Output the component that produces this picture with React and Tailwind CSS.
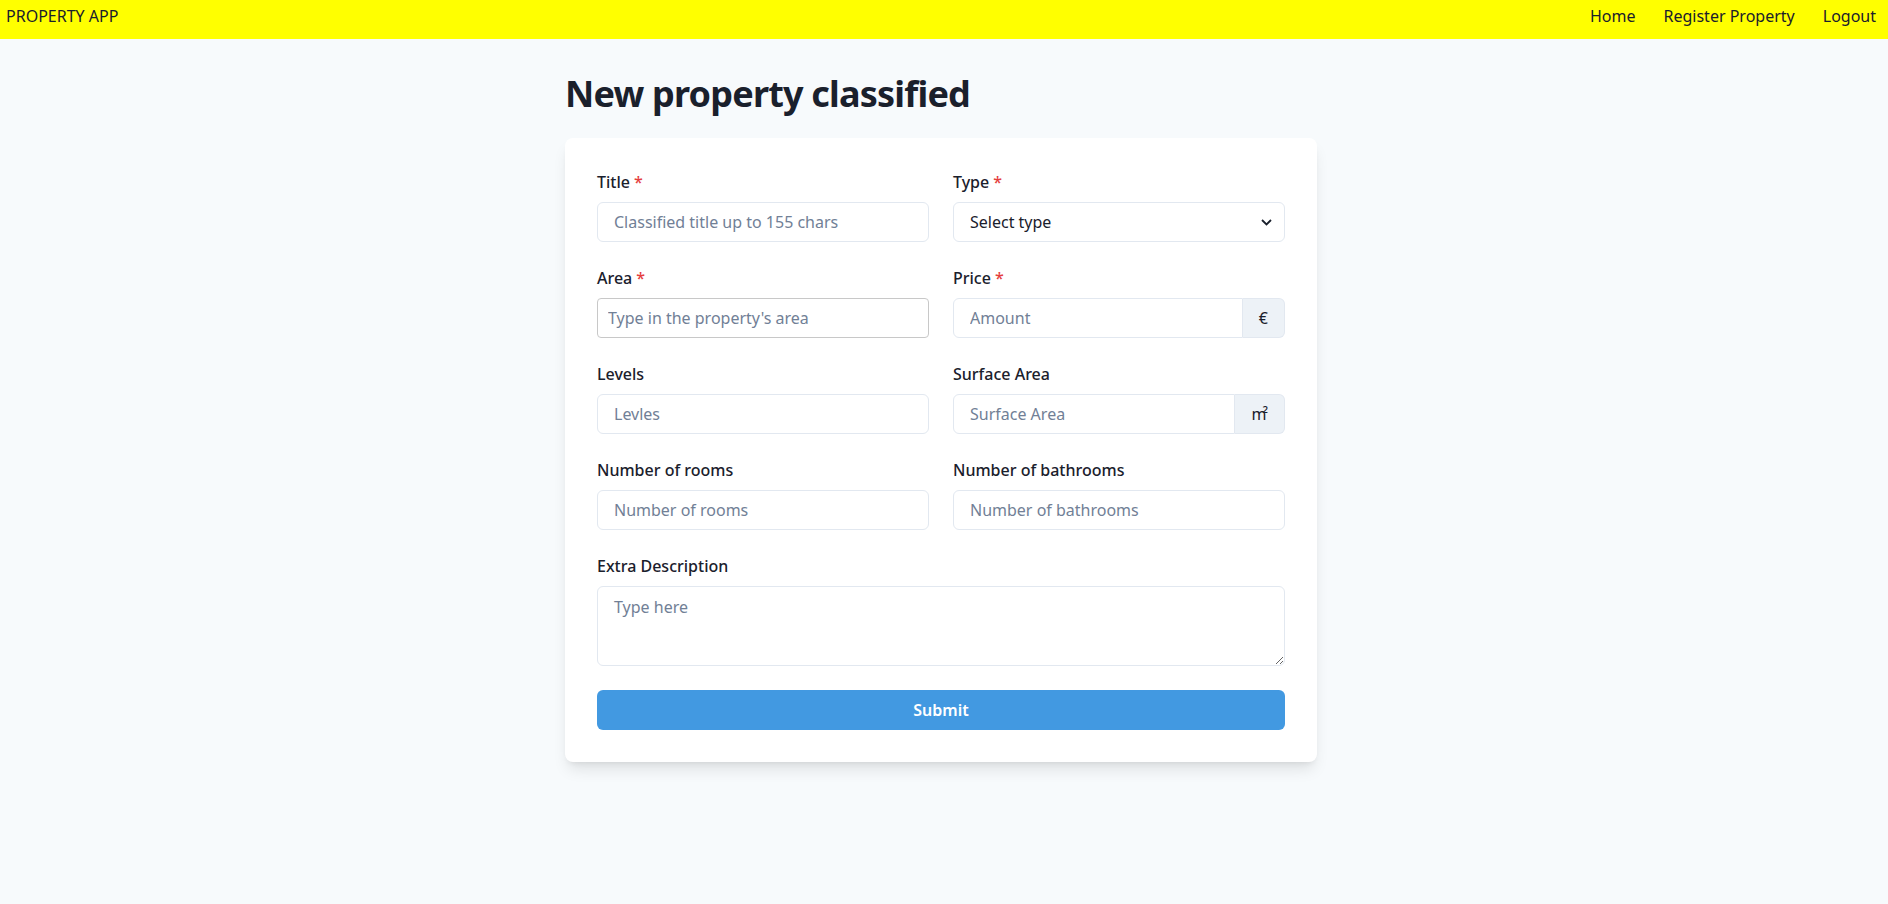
import React from 'react';

const inputBase =
  'h-10 w-full bg-white text-base text-[#1a202c] placeholder:text-[#718096] outline-none';

const Label = ({ children, required }) => (
  <label className="block mb-2 text-base leading-6 font-medium text-[#1a202c]">
    {children}
    {required && <span className="ml-1 text-[#e53e3e]">*</span>}
  </label>
);

const Field = ({ label, required, placeholder }) => (
  <div>
    <Label required={required}>{label}</Label>
    <input
      placeholder={placeholder}
      className={`${inputBase} px-4 border border-[#e2e8f0] rounded-md`}
    />
  </div>
);

const AddonField = ({ label, required, placeholder, addon }) => (
  <div>
    <Label required={required}>{label}</Label>
    <div className="flex h-10">
      <input
        placeholder={placeholder}
        className={`${inputBase} flex-1 min-w-0 px-4 border border-[#e2e8f0] rounded-l-md`}
      />
      <div className="flex items-center px-4 bg-[#edf2f7] border border-l-0 border-[#e2e8f0] rounded-r-md text-base text-[#1a202c]">
        {addon}
      </div>
    </div>
  </div>
);

const App = () => {
  return (
    <div className="min-h-[904px] bg-[#f7fafc] font-['Noto_Sans',sans-serif]">
      <nav className="flex h-[39px] items-start justify-between bg-[#ffff00] pl-1.5 pr-3 pt-1 text-base leading-6 text-[#1a202c]">
        <span>PROPERTY APP</span>
        <div className="flex gap-7">
          <a>Home</a>
          <a>Register Property</a>
          <a>Logout</a>
        </div>
      </nav>

      <div className="mx-auto w-[758px]">
        <h1 className="mt-[35px] mb-[24px] text-4xl leading-10 font-bold tracking-[-0.8px] text-[#1a202c]">
          New property classified
        </h1>

        <form className="w-[752px] rounded-lg bg-white p-8 shadow-lg">
          <div className="grid grid-cols-2 gap-6">
            <Field label="Title" required placeholder="Classified title up to 155 chars" />
            <div>
              <Label required>Type</Label>
              <div className="relative">
                <select
                  defaultValue=""
                  className="h-10 w-full appearance-none rounded-md border border-[#e2e8f0] bg-white pl-4 pr-10 text-base text-[#1a202c] outline-none"
                >
                  <option value="">Select type</option>
                  <option value="rent">Rent</option>
                  <option value="buy">Buy</option>
                  <option value="exchange">Exchange</option>
                  <option value="donation">Donation</option>
                </select>
                <svg
                  className="pointer-events-none absolute right-[13px] top-[17px]"
                  width="11"
                  height="7"
                  viewBox="0 0 11 7"
                  fill="none"
                >
                  <path d="M1 1l4.5 4.5L10 1" stroke="#1a202c" strokeWidth="1.8" />
                </svg>
              </div>
            </div>

            <div>
              <Label required>Area</Label>
              <input
                placeholder="Type in the property's area"
                className={`${inputBase} pl-[10px] pr-3 border border-[#c8c8c8] rounded-sm`}
              />
            </div>
            <AddonField label="Price" required placeholder="Amount" addon="€" />

            <Field label="Levels" placeholder="Levles" />
            <AddonField
              label="Surface Area"
              placeholder="Surface Area"
              addon={<span className="tracking-[-4px] pr-1">m²</span>}
            />

            <Field label="Number of rooms" placeholder="Number of rooms" />
            <Field label="Number of bathrooms" placeholder="Number of bathrooms" />

            <div className="col-span-2">
              <Label>Extra Description</Label>
              <textarea
                placeholder="Type here"
                className="block h-20 w-full resize-y rounded-md border border-[#e2e8f0] bg-white px-4 pt-2 text-base leading-6 text-[#1a202c] placeholder:text-[#718096] outline-none"
              />
            </div>

            <button
              type="button"
              className="col-span-2 h-10 rounded-md bg-[#4299e1] text-base font-semibold text-white"
            >
              Submit
            </button>
          </div>
        </form>
      </div>
    </div>
  );
};

export default App;
